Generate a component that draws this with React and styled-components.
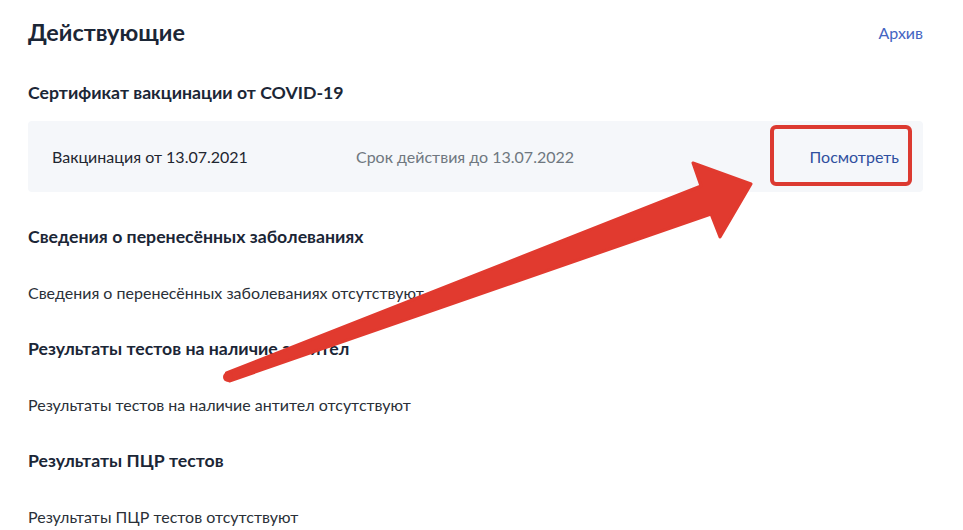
import React from 'react'
import styled, { createGlobalStyle } from 'styled-components';

const GlobalStyle = createGlobalStyle`
    html, body {
        margin:0;
        padding:0;
        background:#ffffff;
        font-family: Lato, "Open Sans", sans-serif;
        color:#0b1f33;
    }
`
const Page = styled.div`
    position:relative;
    width:963px;
    height:530px;
    overflow:hidden;
    padding:0 40px 0 28px;
    box-sizing:border-box;
`
const TopBar = styled.div`
    display:flex;
    justify-content:space-between;
    align-items:center;
    height:64px;
`
const Title = styled.h1`
    margin:0;
    font-size:23.4px;
    font-weight:700;
    color:#1b2636;
`
const Link = styled.a`
    font-size:16px;
    color:${p => p.dark ? '#2f4f9f' : '#4465c2'};
    text-decoration:none;
    cursor:pointer;
`
const SectionTitle = styled.h2`
    margin:0;
    height:56px;
    display:flex;
    align-items:center;
    font-size:17.7px;
    font-weight:700;
    color:#1b2636;
`
const Card = styled.div`
    display:flex;
    align-items:center;
    height:71px;
    margin:1px 0 16px;
    padding:0 24px 0 24px;
    background:#f5f7fa;
    border-radius:4px;
`
const CardText = styled.div`
    font-size:16px;
    color:${p => p.muted ? '#6f7780' : '#1f2630'};
    width:${p => p.w || 'auto'};
`
const Spacer = styled.div`
    flex:1;
`
const Highlight = styled.div`
    position:absolute;
    left:770px;
    top:125px;
    width:134px;
    height:53px;
    border:4px solid #dc3a31;
    border-radius:6px;
`
const Empty = styled.p`
    margin:0;
    height:56px;
    display:flex;
    align-items:center;
    font-size:16px;
    color:#2a3038;
`
const ArrowLayer = styled.svg`
    position:absolute;
    left:0;
    top:0;
    pointer-events:none;
`

const Arrow = () => (
  <ArrowLayer width="963" height="530" viewBox="0 0 963 530">
    <polygon
      points="226.5,373 701,186 693,163 751,184 720,237 711,214 229.5,381"
      fill="#e13a2f"
      stroke="#e13a2f"
      strokeWidth="3"
      strokeLinejoin="round"
    />
    <circle cx="228" cy="377" r="5" fill="#e13a2f" />
  </ArrowLayer>
)

const sections = [
  ['Сведения о перенесённых заболеваниях', 'Сведения о перенесённых заболеваниях отсутствуют'],
  ['Результаты тестов на наличие антител', 'Результаты тестов на наличие антител отсутствуют'],
  ['Результаты ПЦР тестов', 'Результаты ПЦР тестов отсутствуют'],
]

const App = () => {
  return (
    <>
    <GlobalStyle/>
    <Page>
        <TopBar>
            <Title>Действующие</Title>
            <Link>Архив</Link>
        </TopBar>
        <SectionTitle>Сертификат вакцинации от COVID-19</SectionTitle>
        <Card>
            <CardText w="304px">Вакцинация от 13.07.2021</CardText>
            <CardText muted>Срок действия до 13.07.2022</CardText>
            <Spacer/>
            <Link dark>Посмотреть</Link>
        </Card>
        {sections.map(([title, text]) => (
            <div key={title}>
                <SectionTitle>{title}</SectionTitle>
                <Empty>{text}</Empty>
            </div>
        ))}
        <Highlight/>
        <Arrow/>
    </Page>
    </>
  )
}

export default App
